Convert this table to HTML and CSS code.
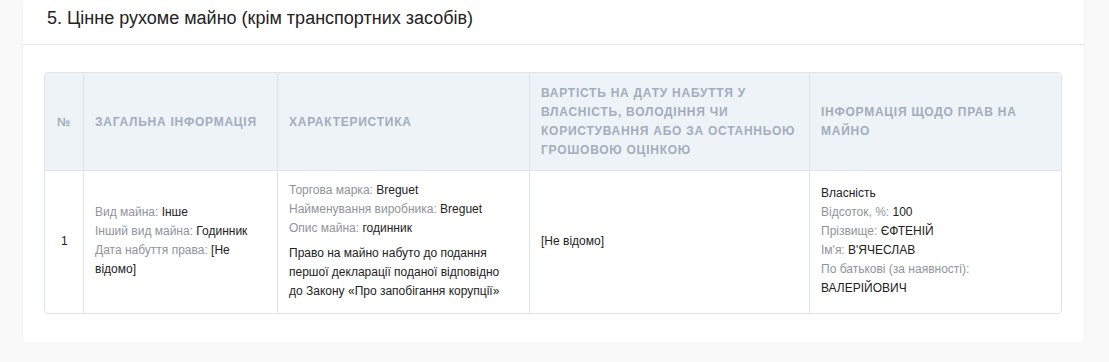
FILE: index.html
```html
<!DOCTYPE html>
<html lang="uk">
<head>
<meta charset="utf-8">
<link rel="stylesheet" href="styles.css">
</head>
<body>
<section class="card">
  <header class="card-head">5. Цінне рухоме майно (крім транспортних засобів)</header>
  <div class="card-body">
    <table class="grid">
      <colgroup>
        <col class="c1"><col class="c2"><col class="c3"><col class="c4"><col class="c5">
      </colgroup>
      <thead>
        <tr>
          <th>№</th>
          <th>Загальна інформація</th>
          <th>Характеристика</th>
          <th>Вартість на дату набуття у власність, володіння чи користування або за останньою грошовою оцінкою</th>
          <th>Інформація щодо прав на майно</th>
        </tr>
      </thead>
      <tbody>
        <tr>
          <td class="num">1</td>
          <td>
            <div><span class="lbl">Вид майна:</span> Інше</div>
            <div><span class="lbl">Інший вид майна:</span> Годинник</div>
            <div><span class="lbl">Дата набуття права:</span> [Не відомо]</div>
          </td>
          <td class="chars">
            <div><span class="lbl">Торгова марка:</span> Breguet</div>
            <div><span class="lbl">Найменування виробника:</span> Breguet</div>
            <div><span class="lbl">Опис майна:</span> годинник</div>
            <p class="note">Право на майно набуто до подання першої декларації поданої відповідно до Закону «Про запобігання корупції»</p>
          </td>
          <td>[Не відомо]</td>
          <td>
            <div>Власність</div>
            <div><span class="lbl">Відсоток, %:</span> 100</div>
            <div><span class="lbl">Прізвище:</span> ЄФТЕНІЙ</div>
            <div><span class="lbl">Ім'я:</span> В'ЯЧЕСЛАВ</div>
            <div><span class="lbl">По батькові (за наявності):</span> ВАЛЕРІЙОВИЧ</div>
          </td>
        </tr>
      </tbody>
    </table>
  </div>
</section>
</body>
</html>
```

FILE: styles.css
```css
html, body {
  margin: 0;
  padding: 0;
  background: #f9f9f9;
  font-family: "Liberation Sans", Arial, sans-serif;
  color: #2b2b2b;
}
body {
  padding: 0 25px 0 23px;
}
.card {
  background: #fff;
  box-shadow: 0 1px 3px rgba(0, 0, 0, 0.06);
  border-radius: 0 0 3px 3px;
}
.card-head {
  font-size: 18px;
  line-height: 24px;
  padding: 6px 23px 14px 24px;
  border-bottom: 1px solid #e6e6e6;
  color: #222;
}
.card-body {
  padding: 27px 22px 28px 21px;
}
.grid {
  width: 100%;
  border-collapse: separate;
  border-spacing: 0;
  table-layout: fixed;
  border: 1px solid #dfe4e9;
  border-radius: 4px;
  font-size: 12px;
  line-height: 19px;
}
.c1 { width: 39px; }
.c2 { width: 194px; }
.c3 { width: 252px; }
.c4 { width: 280px; }
.c5 { width: auto; }
.grid th {
  background: #eef3f8;
  color: #a2adbd;
  font-weight: bold;
  text-transform: uppercase;
  letter-spacing: 0.75px;
  text-align: left;
  vertical-align: middle;
  padding: 11px 10px 10px 11px;
  border-right: 1px solid #dfe4e9;
  border-bottom: 1px solid #dfe4e9;
}
.grid th:first-child {
  border-top-left-radius: 4px;
  padding: 11px 6px 10px 12px;
  letter-spacing: 0;
}
.grid th:last-child {
  border-top-right-radius: 4px;
  border-right: 0;
}
.grid td {
  vertical-align: middle;
  padding: 10px 12px 12px 11px;
  border-right: 1px solid #dfe4e9;
  color: #222;
}
.grid td:last-child {
  border-right: 0;
}
.grid td.num {
  padding-left: 16px;
}
.grid td.chars {
  padding-right: 26px;
}
.lbl {
  color: #8f949b;
}
.note {
  margin: 6px 0 0;
}
```
